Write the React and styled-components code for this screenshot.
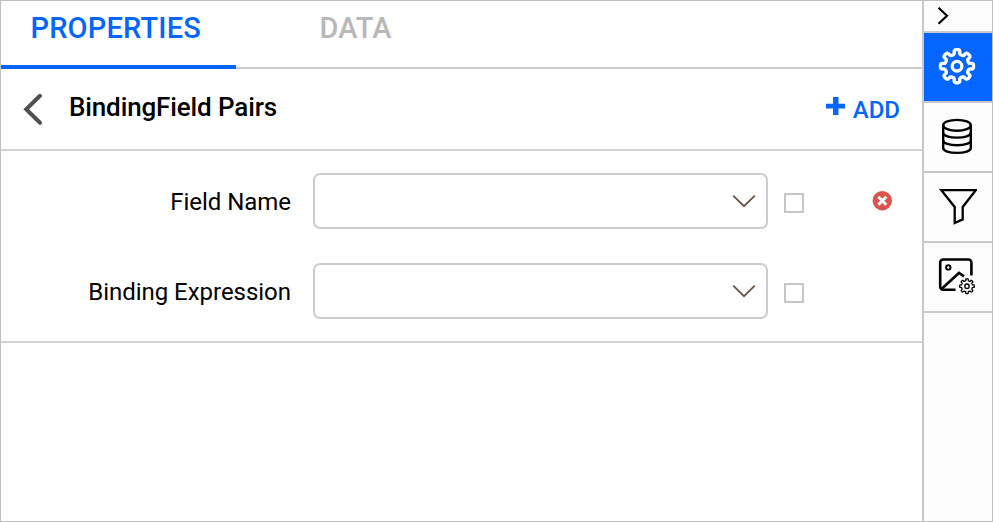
import React from "react";
import styled, { createGlobalStyle } from "styled-components";

const LINE = "#c8c8c8";
const BLUE = "#0565ff";

const GlobalStyle = createGlobalStyle`
  *, *::before, *::after { box-sizing: border-box; }
  body { margin: 0; background: #fff; font-family: Roboto, "Liberation Sans", sans-serif; color: #000; }
  button { font: inherit; border: 0; padding: 0; margin: 0; background: none; color: inherit; }
  svg { display: block; flex: none; }
`;

const Frame = styled.div`
  display: flex;
  width: 993px;
  height: 522px;
  border: 1px solid #bfbfbf;
  overflow: hidden;
`;

const Main = styled.main`
  flex: 1;
  min-width: 0;
  background: #fff;
`;

const Tabs = styled.div`
  display: flex;
  height: 68px;
  box-shadow: inset 0 -2px 0 #cccccc;
`;

const Tab = styled.button`
  width: ${(p) => p.$width}px;
  height: 68px;
  padding: 10px 0 0 ${(p) => p.$indent}px;
  display: flex;
  align-items: flex-start;
  font-size: 29px;
  line-height: 34px;
  font-weight: 500;
  letter-spacing: ${(p) => p.$spacing}px;
  color: ${(p) => (p.$active ? BLUE : "#b8b8b8")};
  border-bottom: ${(p) => (p.$active ? `4px solid ${BLUE}` : "0")};
`;

const Header = styled.header`
  display: flex;
  align-items: center;
  height: 82px;
  padding: 0 22px 1px 21px;
  border-bottom: 2px solid #d2d2d2;
`;

const Title = styled.h1`
  flex: 1;
  margin: -4px 0 0 24px;
  font-size: 26px;
  line-height: 32px;
  font-weight: 500;
  letter-spacing: -0.13px;
`;

const AddButton = styled.button`
  display: flex;
  align-items: center;
  gap: 7px;
  margin-top: 2px;
  color: ${BLUE};
  font-size: 24px;
  line-height: 30px;
  font-weight: 500;
  svg { margin-top: -7px; }
`;

const Fields = styled.section`
  display: grid;
  gap: 34px;
  padding: 22px 0;
  border-bottom: 2px solid #d2d2d2;
`;

const FieldRow = styled.div`
  display: flex;
  align-items: center;
  height: 56px;
`;

const Label = styled.label`
  width: 290px;
  margin: 2px 22px 0 0;
  text-align: right;
  font-size: 24px;
  line-height: 30px;
  letter-spacing: -0.03px;
`;

const Select = styled.button`
  display: flex;
  align-items: center;
  justify-content: flex-end;
  width: 455px;
  height: 56px;
  padding-right: 10px;
  border: 2px solid #cccccc;
  border-radius: 7px;
`;

const Checkbox = styled.span`
  width: 20px;
  height: 20px;
  margin: 4px 0 0 16px;
  border: 2px solid #c6c6c6;
`;

const RemoveButton = styled.button`
  margin: -1px 0 0 68px;
`;

const Rail = styled.nav`
  display: flex;
  flex-direction: column;
  width: 70px;
  border-left: 2px solid ${LINE};
  background: #fcfcfc;
`;

const RailButton = styled.button`
  display: flex;
  align-items: center;
  justify-content: ${(p) => (p.$compact ? "flex-start" : "center")};
  height: ${(p) => (p.$compact ? 32 : 70)}px;
  padding: ${(p) => (p.$compact ? "0 0 0 12px" : "0 2px 0 0")};
  border-bottom: 2px solid ${LINE};
  background: ${(p) => (p.$active ? BLUE : "transparent")};
  color: ${(p) => (p.$active ? "#fff" : "#000")};
`;

// Closed outline with eight rounded teeth, the first pointing up.
function gearPath(cx, cy, inner, outer) {
  const pts = [];
  for (let i = 0; i < 240; i++) {
    const t = (i / 240) * Math.PI * 2;
    const wave = Math.tanh(1.25 * Math.cos(8 * t)) / Math.tanh(1.25);
    const r = (inner + outer) / 2 + ((outer - inner) / 2) * wave;
    const a = t + 0.045 * Math.sin(16 * t);
    pts.push(`${(cx + r * Math.sin(a)).toFixed(2)} ${(cy - r * Math.cos(a)).toFixed(2)}`);
  }
  return `M${pts.join("L")}Z`;
}

const GearIcon = () => (
  <svg width="40" height="40" viewBox="0 0 40 40" fill="none" stroke="currentColor" strokeWidth="3.3" strokeLinejoin="round">
    <path d={gearPath(20, 19.2, 12, 16.6)} />
    <circle cx="20" cy="19.2" r="4.8" />
  </svg>
);

const DatabaseIcon = () => (
  <svg width="40" height="40" viewBox="0 0 40 40" fill="none" stroke="currentColor" strokeWidth="2.4">
    <ellipse cx="20" cy="8.3" rx="13.8" ry="5.4" />
    <path d="M6.2 8.3V31c0 3 6.2 4.9 13.8 4.9S33.8 34 33.8 31V8.3" />
    <path d="M6.2 15.7c0 3 6.2 4.9 13.8 4.9s13.8-1.9 13.8-4.9M6.2 23.4c0 3 6.2 4.9 13.8 4.9s13.8-1.9 13.8-4.9" />
  </svg>
);

const FilterIcon = () => (
  <svg width="40" height="40" viewBox="0 0 40 40" fill="none" stroke="currentColor" strokeWidth="2.3">
    <path d="M4.300 3.100H38.800L25.700 20V32.400L17.700 36V20Z" />
  </svg>
);

const ImageSettingsIcon = () => (
  <svg width="40" height="40" viewBox="0 0 40 40" fill="none" stroke="currentColor" strokeWidth="2.6">
    <path d="M18.500 32.800H6.200a3 3 0 0 1-3-3V5.500a3 3 0 0 1 3-3H31.400a3 3 0 0 1 3 3V18.500" />
    <path d="M4.500 32L22 16L27 19.300" />
    <circle cx="11.300" cy="10.400" r="2.200" strokeWidth="1.900" />
    <path d={gearPath(30, 29.200, 5.500, 7.400)} strokeWidth="1.300" />
    <circle cx="30" cy="29.200" r="2.200" strokeWidth="1.300" />
  </svg>
);

const ExpandIcon = () => (
  <svg width="14" height="20" viewBox="0 0 14 20" fill="none" stroke="currentColor" strokeWidth="2.200">
    <path d="M2.500 1.800L11 9.800L2.500 17.800" />
  </svg>
);

const BackIcon = () => (
  <svg width="23" height="34" viewBox="0 0 23 34" fill="none" stroke="#505050" strokeWidth="4" strokeLinecap="round">
    <path d="M18 3.800L4.200 17.300L18 30.800" />
  </svg>
);

const PlusIcon = () => (
  <svg width="20" height="20" viewBox="0 0 20 20" fill="currentColor">
    <path d="M7 1h5.500v6.700H19v4.800h-6.500V19H7v-6.500H0V7.700h7Z" />
  </svg>
);

const ChevronIcon = () => (
  <svg width="24" height="16" viewBox="0 0 24 16" fill="none" stroke="#6b5344" strokeWidth="1.800">
    <path d="M1.200 2.600L12 13.200L22.800 2.600" />
  </svg>
);

const RemoveIcon = () => (
  <svg width="20" height="20" viewBox="0 0 20 20">
    <circle cx="10.300" cy="9.700" r="9.700" fill="#d9534f" />
    <path d="M6.300 5.700L14.300 13.700M14.300 5.700L6.300 13.700" stroke="#fff" strokeWidth="3" />
  </svg>
);

function Field({ label, removable }) {
  return (
    <FieldRow>
      <Label>{label}</Label>
      <Select aria-label={label}><ChevronIcon /></Select>
      <Checkbox role="checkbox" aria-checked="false" />
      {removable && <RemoveButton aria-label="Remove"><RemoveIcon /></RemoveButton>}
    </FieldRow>
  );
}

export default function App() {
  return (
    <>
      <GlobalStyle />
      <Frame>
        <Main>
          <Tabs>
            <Tab $active $width={235} $indent={29.5} $spacing={0.18}>PROPERTIES</Tab>
            <Tab $width={240} $indent={83.5} $spacing={0.1}>DATA</Tab>
          </Tabs>
          <Header>
            <button aria-label="Back"><BackIcon /></button>
            <Title>BindingField Pairs</Title>
            <AddButton><PlusIcon />ADD</AddButton>
          </Header>
          <Fields>
            <Field label="Field Name" removable />
            <Field label="Binding Expression" />
          </Fields>
        </Main>
        <Rail>
          <RailButton $compact aria-label="Collapse"><ExpandIcon /></RailButton>
          <RailButton $active aria-label="Properties"><GearIcon /></RailButton>
          <RailButton aria-label="Data"><DatabaseIcon /></RailButton>
          <RailButton aria-label="Filter"><FilterIcon /></RailButton>
          <RailButton aria-label="Image settings"><ImageSettingsIcon /></RailButton>
        </Rail>
      </Frame>
    </>
  );
}
